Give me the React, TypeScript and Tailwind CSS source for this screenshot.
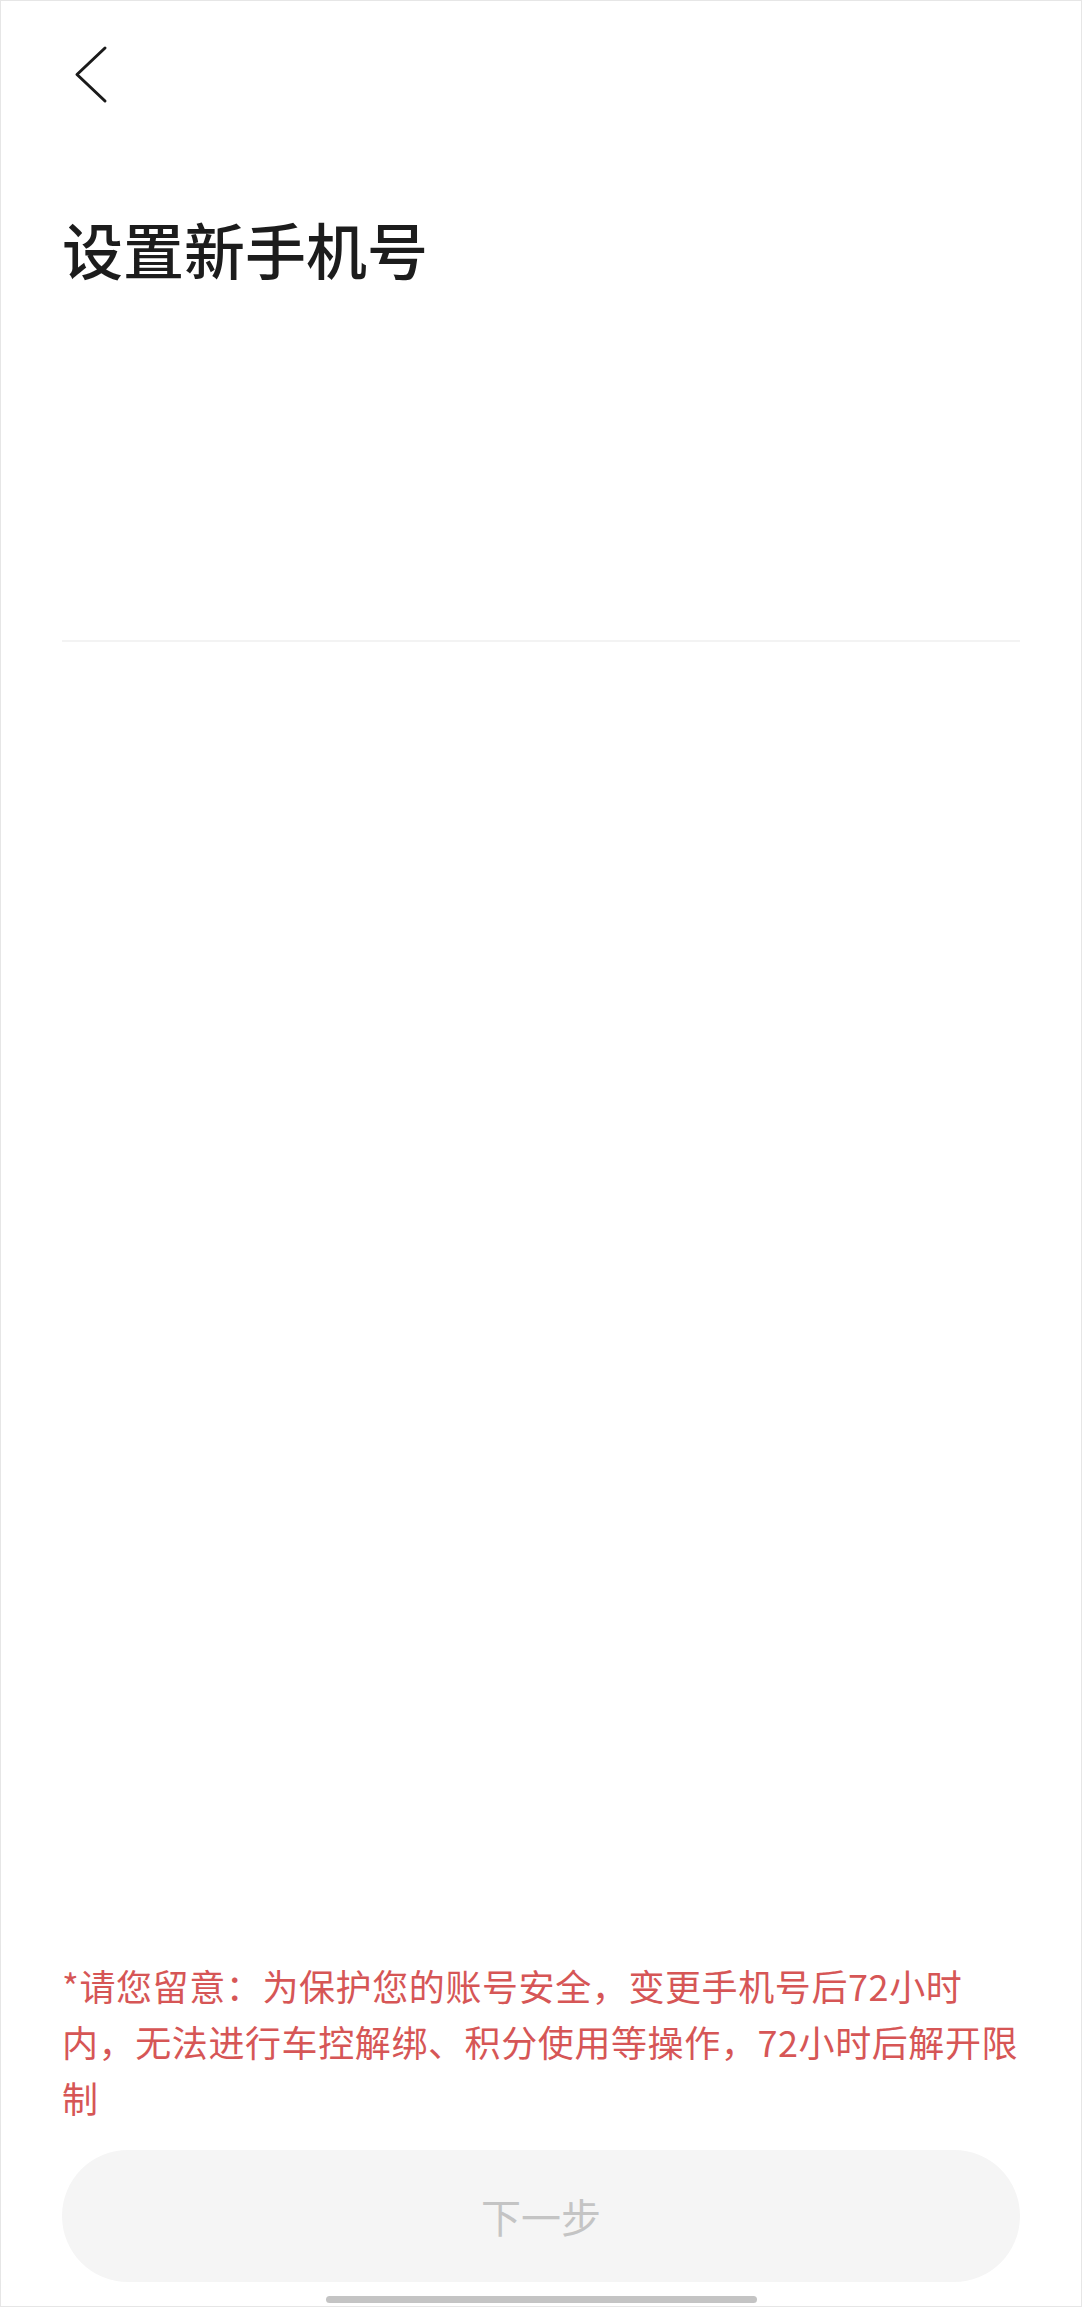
const font = { fontFamily: '"Noto Sans CJK SC", "Noto Sans", sans-serif' };

const BackIcon = () => (
  <svg width="36" height="60" viewBox="0 0 36 60" fill="none" className="ml-[10px]">
    <polyline
      points="33,4 5,30.5 33,57"
      stroke="#1a1a1a"
      strokeWidth="3"
      strokeLinecap="round"
      strokeLinejoin="round"
    />
  </svg>
);

export default function App() {
  return (
    <div
      className="h-[2307px] w-[1082px] bg-white border border-[#e6e6e6] flex flex-col px-[61px]"
      style={font}
    >
      <div className="pt-[43px]">
        <BackIcon />
      </div>

      <h1 className="mt-[114px] text-[61px] leading-none font-medium text-[#1c1c1c]">
        设置新手机号
      </h1>

      <div className="mt-[361px] h-[2px] bg-[#f3f3f3]" />

      <div className="flex-1" />

      <p className="text-[36px] leading-[56px] tracking-[0.6px] text-[#d65656]">
        *请您留意：为保护您的账号安全，变更手机号后72小时内，无法进行车控解绑、积分使用等操作，72小时后解开限制
      </p>

      <button className="mt-[25px] h-[132px] w-full rounded-full bg-[#f5f5f5] text-[40px] text-[#c4c4c4] flex items-center justify-center">
        下一步
      </button>

      <div className="mt-[14px] mb-[3px] flex justify-center">
        <div className="h-[7px] w-[431px] rounded-full bg-[#c4c4c4]" />
      </div>
    </div>
  );
}
